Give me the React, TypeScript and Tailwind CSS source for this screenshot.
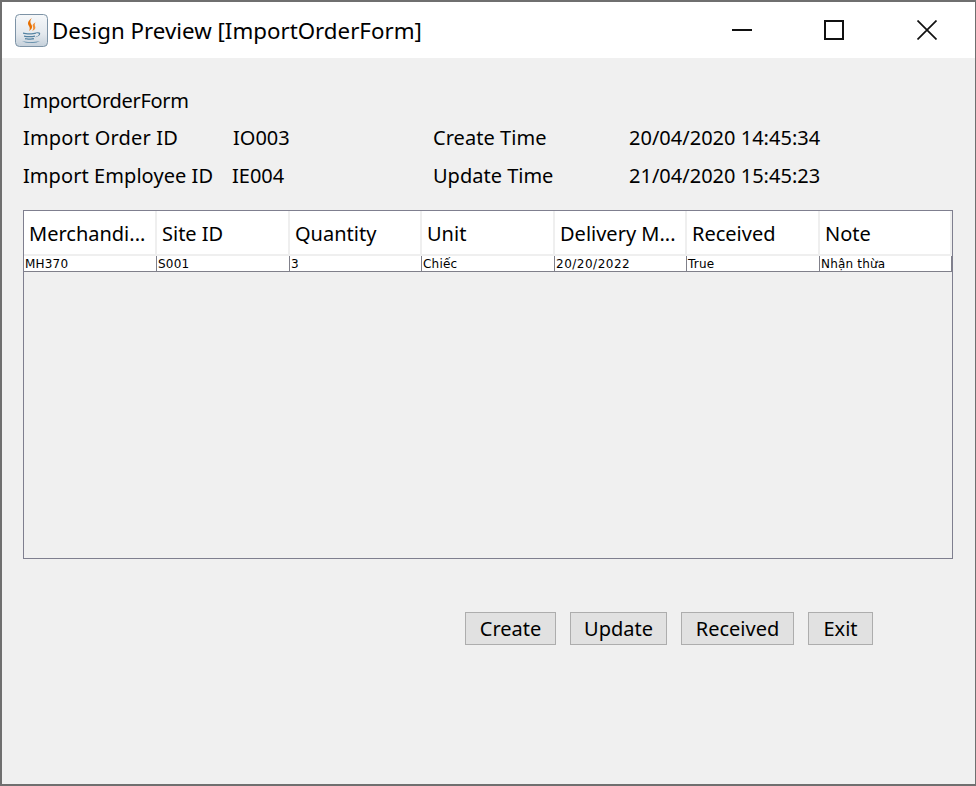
import React from 'react';

const widths = ['w-[133px]', 'w-[133px]', 'w-[132px]', 'w-[133px]', 'w-[132px]', 'w-[133px]', 'w-[132px]'];
const columns = ['Merchandi...', 'Site ID', 'Quantity', 'Unit', 'Delivery M...', 'Received', 'Note'];
const row = ['MH370', 'S001', '3', 'Chiếc', '20/20/2022', 'True', 'Nhận thừa'];
const buttons = [
  { label: 'Create', width: 'w-[91px]' },
  { label: 'Update', width: 'w-[97px]' },
  { label: 'Received', width: 'w-[113px]' },
  { label: 'Exit', width: 'w-[65px]' },
];

const JavaIcon = () => (
  <svg width="33" height="33" viewBox="0 0 33 33" className="shrink-0">
    <defs>
      <linearGradient id="tile" x1="0" y1="0" x2="0" y2="1">
        <stop offset="0" stopColor="#f6f8fa" />
        <stop offset="0.6" stopColor="#e4e9ee" />
        <stop offset="1" stopColor="#c5d0da" />
      </linearGradient>
    </defs>
    <rect x="0.5" y="0.5" width="32" height="32" rx="4" fill="url(#tile)" stroke="#7d93a6" />
    <path d="M17 4c-4 3-5 5-3 8 1 2 1 3 0 5 3-2 4-4 2-7-1-2-1-4 1-6z" fill="#e76f00" />
    <path d="M21 8c-3 1.500-4 3-3 5 .5 1.500 0 3-1 4 3-1 4-3 3-5-.5-1.500-.2-3 1-4z" fill="#f0903a" />
    <path d="M8 18.500c3 1 10 1 13 0v1.200c-3 1-10 1-13 0zM9 21.500c3 .8 8 .8 11 0v1.200c-3 .8-8 .8-11 0zM10 24c2 .6 7 .6 9 0v1.200c-2 .6-7 .6-9 0z" fill="#5382a1" />
    <path d="M21 18.500c3-.8 5 0 4 2-.7 1.500-3 2.500-5 2.800 2-.8 3.800-1.800 4-3 .2-1-1.500-1.300-3-1z" fill="#5382a1" />
    <path d="M7 27c4 1.500 13 1.500 18 0-3 2.500-15 2.500-18 0z" fill="#5382a1" />
  </svg>
);

const App: React.FC = () => {
  return (
    <div className="font-['Noto_Sans',sans-serif] w-[976px] h-[786px] flex flex-col border-2 border-r border-[#6f6f6f] bg-[#f0f0f0] text-black overflow-hidden">
      <div className="h-[56px] shrink-0 bg-white flex items-center pl-[13px]">
        <JavaIcon />
        <span className="ml-[4px] pt-[2px] text-[22.300px] leading-none">Design Preview [ImportOrderForm]</span>
        <div className="ml-auto flex items-center">
          <svg width="20" height="20" viewBox="0 0 20 20" className="mr-[72px]">
            <path d="M0 10h20" stroke="#111" strokeWidth="2" />
          </svg>
          <svg width="20" height="20" viewBox="0 0 20 20" className="mr-[73px]">
            <rect x="1" y="1" width="18" height="18" fill="none" stroke="#111" strokeWidth="2" />
          </svg>
          <svg width="20" height="20" viewBox="0 0 20 20" className="mr-[38px]">
            <path d="M0.500 0.500l19 19M19.500 0.500l-19 19" stroke="#111" strokeWidth="1.700" />
          </svg>
        </div>
      </div>

      <div className="flex-1 pl-[21px] pt-[24px] text-[20px] leading-[38px]">
        <div className="h-[38px] flex items-center tracking-[-0.3px]">ImportOrderForm</div>
        <div className="h-[38px] flex items-center -translate-y-[1px]">
          <span className="w-[210px] tracking-[0.17px]">Import Order ID</span>
          <span className="w-[200px]">IO003</span>
          <span className="w-[196px] tracking-[0.05px]">Create Time</span>
          <span className="tracking-[0.01px]">20/04/2020 14:45:34</span>
        </div>
        <div className="h-[38px] flex items-center -translate-y-[1px]">
          <span className="w-[209px] tracking-[0.07px]">Import Employee ID</span>
          <span className="w-[201px]">IE004</span>
          <span className="w-[196px]">Update Time</span>
          <span className="tracking-[0.01px]">21/04/2020 15:45:23</span>
        </div>

        <div className="mt-[14px] w-[930px] h-[349px] border border-[#7f7f8f]">
          <div className="flex h-[45px] bg-white">
            {columns.map((c, i) => (
              <div key={c} className={`${widths[i]} h-full pl-[5px] pt-[2px] flex items-center border-r-2 border-b-2 border-[#efefef]`}>
                <span className="whitespace-nowrap">{c}</span>
              </div>
            ))}
          </div>
          <div className="flex h-[16px] bg-white border-b border-[#80808a]">
            {row.map((c, i) => (
              <div
                key={c}
                className={`${widths[i]} pl-[1px] pt-[1px] border-r border-[#80808a] font-['DejaVu_Sans',sans-serif] text-[12px] leading-[15px] whitespace-nowrap ${
                  c === '20/20/2022' ? 'tracking-[0.5px]' : 'tracking-[0.2px]'
                }`}
              >
                {c}
              </div>
            ))}
          </div>
        </div>

        <div className="mt-[53px] ml-[442px] flex gap-[14px]">
          {buttons.map((b) => (
            <button key={b.label} className={`${b.width} h-[33px] border border-[#adadad] bg-[#e1e1e1] text-[20px] leading-none`}>
              {b.label}
            </button>
          ))}
        </div>
      </div>
    </div>
  );
};

export default App;
